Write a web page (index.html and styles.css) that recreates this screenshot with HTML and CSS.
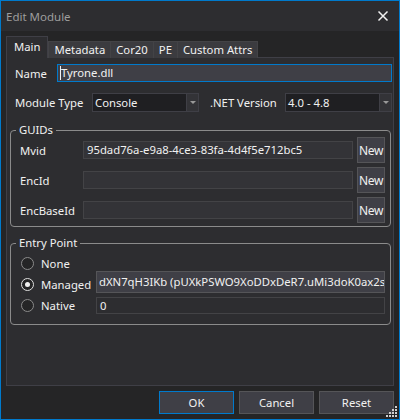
FILE: index.html
```html
<!DOCTYPE html>
<html>
<head>
<meta charset="utf-8">
<title>Edit Module</title>
<link rel="stylesheet" href="styles.css">
</head>
<body>
<div class="window">
  <div class="titlebar">
    <span class="title">Edit Module</span>
    <svg class="close" width="12" height="12" viewBox="0 0 12 12"><path d="M1.5 1.5 L10.5 10.5 M10.5 1.5 L1.5 10.5" stroke="#f1f1f1" stroke-width="1.5"/></svg>
  </div>
  <div class="body">
    <div class="tabs">
      <div class="tab selected">Main</div>
      <div class="tab">Metadata</div>
      <div class="tab">Cor20</div>
      <div class="tab">PE</div>
      <div class="tab">Custom Attrs</div>
    </div>
    <div class="panel">
      <div class="row name-row">
        <span class="label name-label">Name</span>
        <div class="input name-input"><span class="caret"></span>Tyrone.dll</div>
      </div>
      <div class="row type-row">
        <span class="label type-label">Module Type</span>
        <div class="combo type-combo"><span class="combo-text">Console</span><span class="combo-btn"><span class="tri"></span></span></div>
        <span class="label net-label">.NET Version</span>
        <div class="combo net-combo"><span class="combo-text">4.0 - 4.8</span><span class="combo-btn"><span class="tri"></span></span></div>
      </div>
      <div class="group guids">
        <span class="group-title">GUIDs</span>
        <div class="guid-row">
          <span class="label guid-label">Mvid</span>
          <div class="box guid-box">95dad76a-e9a8-4ce3-83fa-4d4f5e712bc5</div>
          <div class="new-btn">New</div>
        </div>
        <div class="guid-row">
          <span class="label guid-label">EncId</span>
          <div class="box guid-box"></div>
          <div class="new-btn">New</div>
        </div>
        <div class="guid-row">
          <span class="label guid-label">EncBaseId</span>
          <div class="box guid-box"></div>
          <div class="new-btn">New</div>
        </div>
      </div>
      <div class="group entry">
        <span class="group-title">Entry Point</span>
        <div class="radio-row none-row">
          <span class="radio"></span><span class="label">None</span>
        </div>
        <div class="radio-row managed-row">
          <div class="radio-col"><span class="radio checked"></span><span class="label">Managed</span></div>
          <div class="box managed-box">dXN7qH3IKb (pUXkPSWO9XoDDxDeR7.uMi3doK0ax2s</div>
        </div>
        <div class="radio-row native-row">
          <div class="radio-col"><span class="radio"></span><span class="label">Native</span></div>
          <div class="box native-box">0</div>
        </div>
      </div>
    </div>
    <div class="footer">
      <div class="btn default">OK</div>
      <div class="btn">Cancel</div>
      <div class="btn">Reset</div>
    </div>
  </div>
  <svg class="grip" width="11" height="11" viewBox="0 0 11 11">
    <rect x="9" y="0" width="2" height="2" fill="#d0d0d0"/>
    <rect x="6" y="3" width="2" height="2" fill="#d0d0d0"/>
    <rect x="9" y="3" width="2" height="2" fill="#d0d0d0"/>
    <rect x="3" y="6" width="2" height="2" fill="#d0d0d0"/>
    <rect x="6" y="6" width="2" height="2" fill="#d0d0d0"/>
    <rect x="9" y="6" width="2" height="2" fill="#d0d0d0"/>
    <rect x="0" y="9" width="2" height="2" fill="#d0d0d0"/>
    <rect x="3" y="9" width="2" height="2" fill="#d0d0d0"/>
    <rect x="6" y="9" width="2" height="2" fill="#d0d0d0"/>
    <rect x="9" y="9" width="2" height="2" fill="#d0d0d0"/>
  </svg>
</div>
</body>
</html>
```
FILE: styles.css
```css
* { box-sizing: border-box; }
html, body { margin: 0; padding: 0; }
body {
  background: #252526;
  font-family: "Noto Sans", "Open Sans", sans-serif;
  font-size: 11.3px;
  color: #f1f1f1;
}
.window {
  position: relative;
  width: 400px;
  height: 420px;
  border: 1px solid #007acc;
  background: #252526;
  display: flex;
  flex-direction: column;
}
.titlebar {
  height: 30px;
  flex: none;
  background: #2d2d30;
  display: flex;
  align-items: center;
  justify-content: space-between;
  padding: 0 10px 0 5px;
}
.title { color: #9d9d9d; font-size: 11.5px; }
.close { display: block; }
.body {
  flex: 1;
  display: flex;
  flex-direction: column;
  padding: 5px;
  min-height: 0;
}
.tabs {
  display: flex;
  align-items: flex-end;
  height: 21px;
  position: relative;
  z-index: 1;
}
.tab {
  height: 17px;
  line-height: 15px;
  padding: 0 5px;
  background: #3b3b3f;
  border: 1px solid #434346;
  border-bottom: none;
  margin-bottom: -1px;
  margin-left: -1px;
  white-space: nowrap;
}
.tab.selected {
  height: 22px;
  line-height: 19px;
  padding: 0 7px;
  margin-left: 0;
  margin-right: 1px;
  background: #2d2d30;
  border-color: #3f3f46;
  margin-bottom: -1px;
}
.panel {
  flex: 1;
  background: #2d2d30;
  border: 1px solid #3f3f46;
  display: flex;
  flex-direction: column;
}
.row { display: flex; align-items: center; }
.label { white-space: nowrap; }
.name-row { margin: 6px 1px 0 8px; }
.name-label { width: 42px; }
.input {
  flex: 1;
  height: 18px;
  line-height: 16px;
  padding: 0 2px;
  background: #3f3f46;
  border: 1px solid #007acc;
  display: flex;
  align-items: center;
}
.caret { width: 1px; height: 14px; background: #f1f1f1; }
.type-row { margin: 11px 1px 0 8px; }
.type-label { width: 77px; }
.net-label { width: 75px; margin-left: 11px; }
.combo {
  height: 19px;
  display: flex;
  border: 1px solid #3f3f46;
  background: #1f1f22;
}
.type-combo { width: 107px; }
.net-combo { flex: 1; }
.combo-text { flex: 1; line-height: 17px; padding-left: 2px; }
.combo-btn {
  width: 12px;
  background: #333337;
  border-left: 1px solid #3f3f46;
  display: flex;
  align-items: center;
  justify-content: center;
}
.tri {
  width: 0; height: 0;
  border-left: 3px solid transparent;
  border-right: 3px solid transparent;
  border-top: 3px solid #999999;
}
.group {
  position: relative;
  margin: 0 2px 0 3px;
  border: 1px solid #8b8b8b;
  border-radius: 4px;
}
.group-title {
  position: absolute;
  top: -9px;
  left: 5px;
  padding: 0 3px;
  line-height: 16px;
  background: #2d2d30;
}
.guids { margin-top: 18px; padding: 6px 5px 3px 9px; }
.guid-row { display: flex; align-items: center; height: 26px; }
.guid-row + .guid-row { margin-top: 4px; }
.guid-label { width: 63px; }
.box {
  height: 18px;
  line-height: 16px;
  padding: 0 3px;
  border: 1px solid #434346;
  background: #333337;
  white-space: nowrap;
  overflow: hidden;
}
.guid-box { width: 270px; }
.new-btn {
  width: 28px;
  height: 26px;
  margin-left: 4px;
  background: #3f3f46;
  border: 1px solid #555558;
  display: flex;
  align-items: center;
  justify-content: center;
  font-size: 12px;
  letter-spacing: -0.3px;
}
.entry { margin-top: 16px; padding: 11px 5px 10px 10px; }
.radio-row { display: flex; align-items: center; }
.none-row { height: 16px; }
.managed-row { height: 22px; }
.native-row { height: 17px; margin-top: 4px; }
.radio-col { width: 75px; display: flex; align-items: center; }
.managed-row .radio-col { padding-top: 4px; }
.radio {
  width: 13px;
  height: 13px;
  border-radius: 50%;
  border: 1px solid #8b8b8b;
  background: #252526;
  margin-right: 7px;
  flex: none;
  display: flex;
  align-items: center;
  justify-content: center;
}
.radio.checked { border-color: #e0e0e0; }
.radio.checked::after {
  content: "";
  width: 5px;
  height: 5px;
  border-radius: 50%;
  background: #f1f1f1;
}
.managed-box { flex: 1; height: 22px; line-height: 20px; padding: 0 2px; background: #3f3f46; border-color: #555558; }
.native-box { flex: 1; height: 17px; line-height: 15px; background: #2d2d30; }
.footer {
  display: flex;
  justify-content: flex-end;
  gap: 5px;
  margin-top: 5px;
}
.btn {
  width: 75px;
  height: 23px;
  background: #3f3f46;
  border: 1px solid #555558;
  display: flex;
  align-items: center;
  justify-content: center;
}
.btn.default { border-color: #007acc; }
.grip { position: absolute; right: 2px; bottom: 2px; }
```
